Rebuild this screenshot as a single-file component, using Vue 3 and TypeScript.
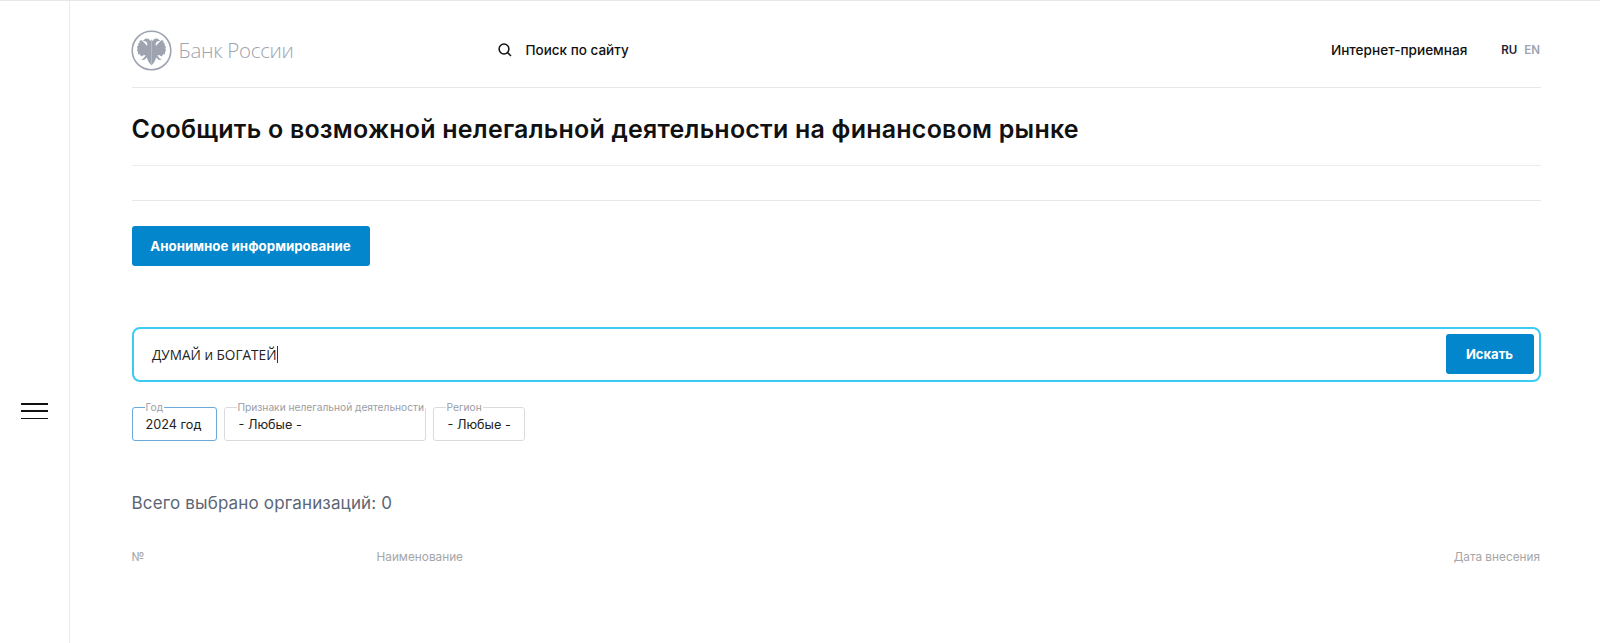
<script setup lang="ts">
const filters: { label: string; value: string; cls: string }[] = [
  { label: 'Год', value: '2024 год', cls: 'year' },
  { label: 'Признаки нелегальной деятельности', value: '- Любые -', cls: 'sign' },
  { label: 'Регион', value: '- Любые -', cls: 'region' },
]
const eagle =
  'M20.5 9.5L19.2 11 17.6 8.8 14.6 8.6 11.8 10.8 15 11.6 16.4 13.4 16 16 14 13.6 10.4 10 8.4 11 8.6 12.8 7.2 13.4 7.4 15.4 6 16.4 6.6 18.6 6 20.4 7 22 7 24 9 24.6 10.2 26.4 13 25 14.6 25.6 12.8 28 10.2 29.6 13 30 16 27.6 16.8 30.4 18.4 33 20.5 35.4Z'
</script>

<template>
  <div class="page">
    <aside class="side">
      <div class="burger"><i></i><i></i><i></i></div>
    </aside>
    <main class="main">
      <header class="head">
        <div class="logo">
          <svg width="41" height="41" viewBox="0 0 41 41">
            <circle cx="20.5" cy="20.5" r="19.3" fill="none" stroke="#9ea3b0" stroke-width="1.6" />
            <path fill="#9ea3b0" :d="eagle" />
            <path fill="#9ea3b0" :d="eagle" transform="matrix(-1 0 0 1 41 0)" />
          </svg>
          <span class="logo-text">Банк России</span>
        </div>
        <div class="search-link">
          <svg width="14" height="14" viewBox="0 0 14 14" fill="none" stroke="#111" stroke-width="1.5">
            <circle cx="6" cy="6" r="4.9" />
            <path d="M9.6 9.6L13 13" />
          </svg>
          <span>Поиск по сайту</span>
        </div>
        <div class="head-right">
          <span class="reception">Интернет-приемная</span>
          <span class="lang"><b>RU</b><em>EN</em></span>
        </div>
      </header>

      <h1 class="title">Сообщить о возможной нелегальной деятельности на финансовом рынке</h1>
      <div class="strip"></div>

      <button class="btn anon" type="button">Анонимное информирование</button>

      <div class="searchbox">
        <span class="query">ДУМАЙ и БОГАТЕЙ</span><span class="caret"></span>
        <button class="btn find" type="button">Искать</button>
      </div>

      <div class="filters">
        <div v-for="f in filters" :key="f.label" class="filter" :class="f.cls">
          <span class="legend">{{ f.label }}</span>
          <span class="val">{{ f.value }}</span>
        </div>
      </div>

      <p class="total">Всего выбрано организаций: 0</p>

      <div class="thead">
        <span class="c-num">№</span>
        <span class="c-name">Наименование</span>
        <span class="c-date">Дата внесения</span>
      </div>
    </main>
  </div>
</template>

<style>
html, body { margin: 0; background: #fff; }
</style>

<style scoped>
.page {
  display: flex;
  height: 643px;
  box-sizing: border-box;
  border-top: 1px solid #e8e8e8;
  overflow: hidden;
  font-family: Inter, Roboto, "Noto Sans", sans-serif;
  color: #111;
  background: #fff;
}
.side {
  width: 70px;
  flex: none;
  box-sizing: border-box;
  border-right: 1px solid #ececec;
  display: flex;
  justify-content: center;
  padding-top: 402px;
}
.burger {
  width: 27px;
  height: 16px;
  margin-right: 1px;
  display: flex;
  flex-direction: column;
  justify-content: space-between;
}
.burger i { display: block; height: 1.5px; background: #111; }
.main { width: 1409.5px; margin-left: 61.5px; flex: none; }
.head {
  display: flex;
  align-items: center;
  height: 87px;
  box-sizing: border-box;
  border-bottom: 1px solid #e8e8e8;
  padding-top: 12px;
}
.logo { display: flex; align-items: center; width: 366px; flex: none; margin-left: -1px; margin-right: 1px; }
.logo svg { flex: none; }
.logo-text {
  margin-left: 7px;
  font-family: "Open Sans", sans-serif;
  font-weight: 300;
  font-size: 20.5px;
  color: #9ea3b0;
  letter-spacing: -0.3px;
}
.search-link { display: flex; align-items: center; gap: 14px; font-size: 13.5px; font-weight: 500; }
.head-right { margin-left: auto; display: flex; align-items: center; }
.reception { font-size: 13.6px; font-weight: 500; }
.lang { margin-left: 34px; margin-right: 1px; font-size: 11.5px; display: flex; gap: 7px; font-weight: 600; }
.lang b { font-weight: 600; color: #1a2233; }
.lang em { font-style: normal; color: #9ea3b0; }
.title {
  margin: 0;
  height: 78px;
  line-height: 82px;
  box-sizing: border-box;
  border-bottom: 1px solid #ececec;
  font-size: 25px;
  font-weight: 600;
  color: #111;
  letter-spacing: 0.22px;
  white-space: nowrap;
}
.strip { height: 34px; border-bottom: 1px solid #e8e8e8; }
.btn {
  display: block;
  border: 0;
  border-radius: 3px;
  background: #0386cb;
  color: #fff;
  font-family: inherit;
  font-size: 13px;
  font-weight: 700;
  height: 40px;
  padding: 0;
}
.anon { width: 238px; margin-top: 25px; font-size: 13.3px; }
.searchbox {
  margin-top: 61px;
  height: 55px;
  box-sizing: border-box;
  border: 2px solid #3ccbf2;
  border-radius: 8px;
  display: flex;
  align-items: center;
  padding-left: 18.5px;
  padding-right: 5.5px;
  padding-bottom: 2px;
}
.query { font-size: 13.6px; color: #222; font-family: "Open Sans", Inter, sans-serif; padding-top: 2px; }
.caret { width: 1px; height: 17px; background: #333; margin-left: 1px; margin-top: 2px; }
.find { width: 88px; margin-left: auto; }
.filters { display: flex; gap: 7px; margin-top: 25px; }
.filter {
  position: relative;
  box-sizing: border-box;
  height: 34px;
  border: 1px solid #d8dadd;
  border-radius: 3px;
  display: flex;
  align-items: center;
  font-size: 12.7px;
  color: #222;
}
.legend {
  position: absolute;
  top: -6px;
  left: 12px;
  background: #fff;
  padding: 0 1px;
  font-size: 10.2px;
  line-height: 11px;
  color: #9a9da3;
  white-space: nowrap;
}
.val { white-space: nowrap; }
.year { width: 85px; border-color: #6aa9da; padding-left: 13px; }
.sign { width: 202px; padding-left: 14px; }
.region { width: 92px; padding-left: 14px; }
.total {
  margin: 51px 0 0;
  font-size: 17px;
  letter-spacing: 0.15px;
  line-height: 22px;
  color: #5c6675;
}
.thead {
  display: flex;
  margin-top: 36px;
  font-size: 11.8px;
  line-height: 14px;
  color: #a4a6a9;
}
.c-num { width: 245px; }
.c-date { margin-left: auto; margin-right: 1px; }
</style>
